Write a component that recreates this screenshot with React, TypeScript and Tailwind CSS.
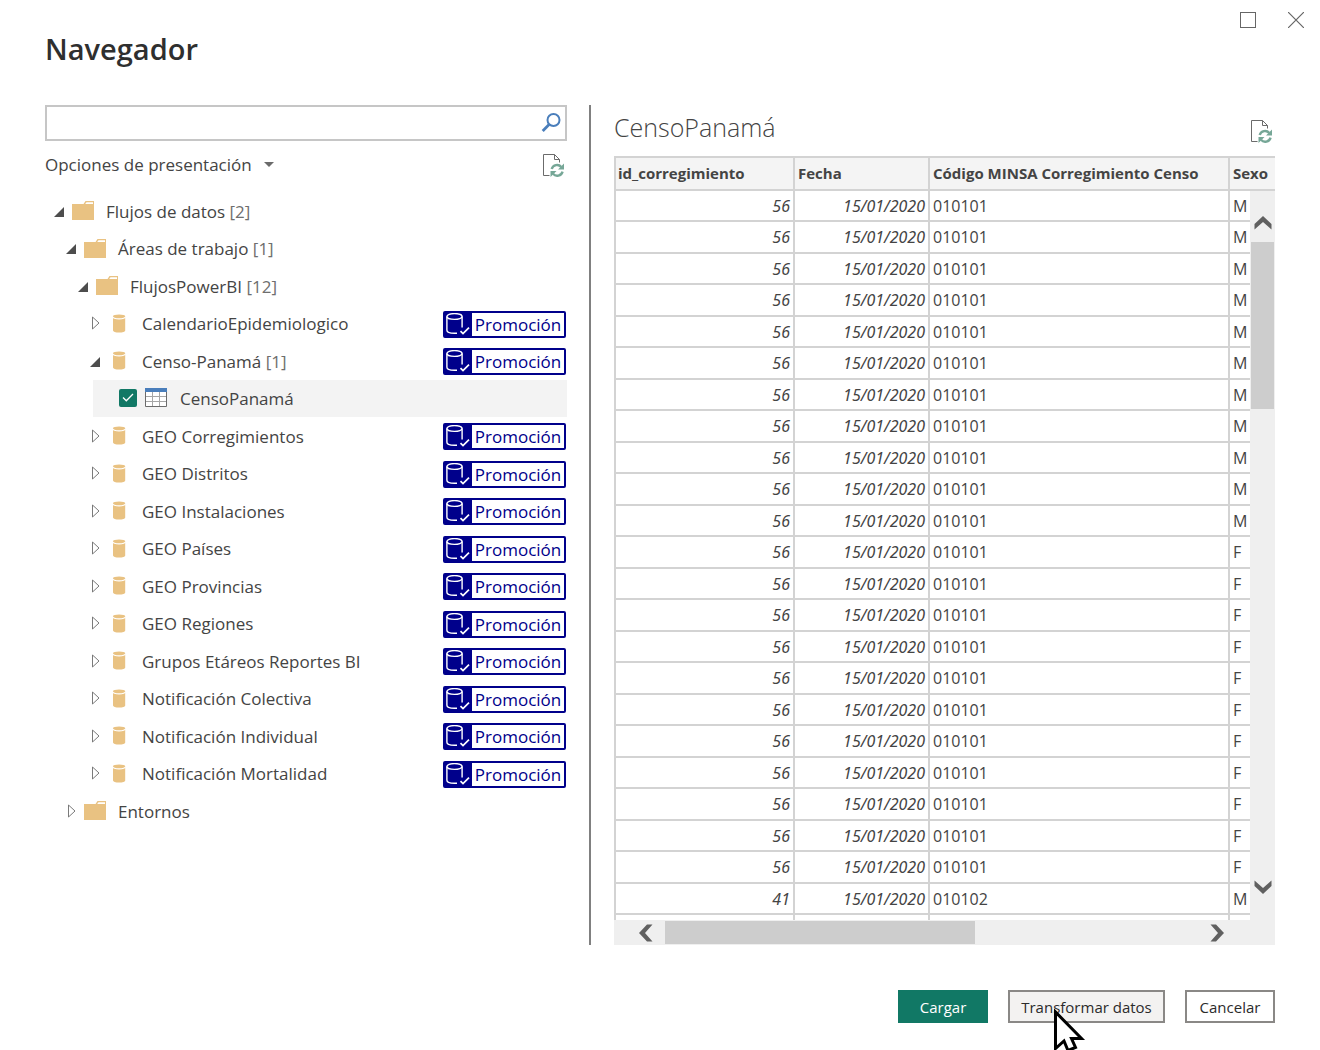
import type { ReactNode } from "react";

type Kind = "folder" | "flow" | "table";
type Node = { level: 0 | 1 | 2 | 3; kind: Kind; name: string; count?: number; open?: boolean };

const flow = (name: string): Node => ({ level: 3, kind: "flow", name });

const NODES: Node[] = [
  { level: 0, kind: "folder", name: "Flujos de datos", count: 2, open: true },
  { level: 1, kind: "folder", name: "Áreas de trabajo", count: 1, open: true },
  { level: 2, kind: "folder", name: "FlujosPowerBI", count: 12, open: true },
  flow("CalendarioEpidemiologico"),
  { level: 3, kind: "flow", name: "Censo-Panamá", count: 1, open: true },
  { level: 3, kind: "table", name: "CensoPanamá" },
  flow("GEO Corregimientos"),
  flow("GEO Distritos"),
  flow("GEO Instalaciones"),
  flow("GEO Países"),
  flow("GEO Provincias"),
  flow("GEO Regiones"),
  flow("Grupos Etáreos Reportes BI"),
  flow("Notificación Colectiva"),
  flow("Notificación Individual"),
  flow("Notificación Mortalidad"),
  { level: 1, kind: "folder", name: "Entornos" },
];

const INDENT = ["pl-[9px]", "pl-[21px]", "pl-[33px]", "pl-[45px]"];

type Row = { id: string; date: string; code: string; sex: string };
const DATE = "15/01/2020";
const ROWS: Row[] = [
  ...Array.from({ length: 22 }, (_, i) => ({ id: "56", date: DATE, code: "010101", sex: i < 11 ? "M" : "F" })),
  { id: "41", date: DATE, code: "010102", sex: "M" },
  { id: "41", date: DATE, code: "010102", sex: "M" },
];

function RefreshPage() {
  return (
    <svg width="23" height="25" viewBox="0 0 23 25" fill="none" aria-hidden="true">
      <path d="M7.5 22.5H1.5V1.5H12.5L17.5 6.5V9.5M12.5 1.5V6.5H17.5" stroke="#6b6b6b" />
      <path d="M9.7 16A5.6 5.6 0 0 1 19.3 14M20.6 18.6A5.6 5.6 0 0 1 11 20.8" stroke="#76a797" strokeWidth="2.4" />
      <path d="M22 10.5V16.5H16ZM8.5 24V18H14.5Z" fill="#76a797" />
    </svg>
  );
}

function Folder() {
  return (
    <svg width="22" height="19" viewBox="0 0 22 19" aria-hidden="true">
      <path d="M0 3H11.5L13.5 0H22V19H0Z" fill="#e9c282" />
      <path d="M13.2 3L14.5 1.2H21V3Z" fill="#fff" />
    </svg>
  );
}

function Cylinder() {
  return (
    <svg width="22" height="19" viewBox="0 0 22 19" aria-hidden="true">
      <path d="M5 3V16.4C5 17.6 7.5 18.5 11 18.5S17.2 17.6 17.2 16.4V3Z" fill="#e9c282" />
      <ellipse cx="11.1" cy="3" rx="6.8" ry="2.6" fill="#fff" />
      <ellipse cx="11.1" cy="2.3" rx="6.2" ry="1.9" fill="#e9c282" />
    </svg>
  );
}

function TableIcon() {
  return (
    <svg width="22" height="19" viewBox="0 0 22 19" fill="none" aria-hidden="true">
      <path d="M0.5 4V18.5H21.5V4" fill="#fff" stroke="#6b6b6b" />
      <path d="M1 8.5H21M1 13.5H21M7.5 4V18M14.5 4V18" stroke="#a6a6a6" />
      <path d="M0 0H22V4H0Z" fill="#4a7ebb" />
    </svg>
  );
}

function Toggle({ open, name }: { open?: boolean; name: string }) {
  return (
    <button type="button" aria-label={name} aria-expanded={!!open} className="mr-2 flex w-[10px] shrink-0 justify-end">
      {open ? (
        <svg width="10" height="10" viewBox="0 0 10 10" aria-hidden="true">
          <path d="M10 0V10H0Z" fill="#4d4d4d" />
        </svg>
      ) : (
        <svg width="8" height="16" viewBox="0 0 8 16" fill="none" aria-hidden="true">
          <path d="M0.5 1V13L7 7Z" stroke="#7a7a7a" />
        </svg>
      )}
    </button>
  );
}

function Badge() {
  return (
    <span className="mr-px ml-auto flex h-[27px] w-[123px] shrink-0 items-stretch rounded-xs border-2 border-[#00008b] bg-[#00008b]">
      <svg className="w-[27px]" viewBox="0 0 27 23" fill="none" stroke="#fff" strokeWidth="1.4" aria-hidden="true">
        <ellipse cx="9.5" cy="3.5" rx="7.6" ry="2.9" />
        <path d="M1.9 3.5V17.2C1.9 19 5 20.3 9.5 20.3H12M17.1 3.5V14.5" />
        <path d="M15.5 18.2L18 20.6L24 14.6" strokeWidth="1.7" />
      </svg>
      <span className="flex flex-1 items-center justify-center bg-white pt-px text-[17px] text-[#00008b]">Promoción</span>
    </span>
  );
}

function TreeRow({ node }: { node: Node }) {
  if (node.kind === "table") {
    return (
      <li className="flex odd:h-[37px] even:h-[38px]">
        <label className="ml-12 flex h-[37px] flex-1 items-center bg-[#f3f3f3] pl-[26px]">
          <span className="grid place-items-center pb-0.5">
            <input
              type="checkbox"
              defaultChecked
              className="col-start-1 row-start-1 size-[18px] appearance-none rounded-xs bg-[#117865]"
            />
            <svg className="col-start-1 row-start-1" width="12" height="9" viewBox="0 0 12 9" fill="none" aria-hidden="true">
              <path d="M1 4.5L4.3 7.8L11 1" stroke="#fff" strokeWidth="1.3" />
            </svg>
          </span>
          <span className="mr-[13px] ml-2 pb-0.5">
            <TableIcon />
          </span>
          {node.name}
        </label>
      </li>
    );
  }
  return (
    <li className={`flex items-center odd:h-[37px] even:h-[38px] ${INDENT[node.level]}`}>
      <Toggle open={node.open} name={node.name} />
      <span className="mr-3 pb-0.5">{node.kind === "folder" ? <Folder /> : <Cylinder />}</span>
      <span className="whitespace-nowrap">
        {node.name}
        {node.count !== undefined && <span className="text-[#6e6e6e]"> [{node.count}]</span>}
      </span>
      {node.kind === "flow" && <Badge />}
    </li>
  );
}

function Arrow({ d, label, className }: { d: string; label: string; className: string }) {
  return (
    <button type="button" aria-label={label} className={className}>
      <svg width="18" height="18" viewBox="0 0 18 18" aria-hidden="true">
        <path d={d} fill="#606060" />
      </svg>
    </button>
  );
}

function Th({ children }: { children: ReactNode }) {
  return (
    <th scope="col" className="h-[35px] border-y-2 border-r-2 border-[#d3d3d3] px-[3px] pt-0 pb-0.5 text-left font-bold first:border-l-2 first:px-[2px]">
      {children}
    </th>
  );
}

function Preview() {
  const cell = "border-r-2 border-b-2 border-[#d3d3d3] px-[3px] py-0";
  return (
    <div className="relative min-h-0 flex-1 overflow-hidden">
      <table className="w-[716px] table-fixed border-separate border-spacing-0 text-base leading-5 whitespace-nowrap">
        <colgroup>
          <col className="w-[181px]" />
          <col className="w-[135px]" />
          <col className="w-[300px]" />
          <col className="w-[100px]" />
        </colgroup>
        <thead className="bg-[#f4f4f4] text-[15px]">
          <tr>
            <Th>id_corregimiento</Th>
            <Th>Fecha</Th>
            <Th>Código MINSA Corregimiento Censo</Th>
            <Th>Sexo</Th>
          </tr>
        </thead>
        <tbody>
          {ROWS.map((r, i) => (
            <tr key={i} className="odd:h-[31px] even:h-[32px]">
              <td className={`${cell} border-l-2 text-right font-['Noto_Sans',sans-serif] italic`}>{r.id}</td>
              <td className={`${cell} text-right font-['Noto_Sans',sans-serif] italic`}>{r.date}</td>
              <td className={cell}>{r.code}</td>
              <td className={cell}>{r.sex}</td>
            </tr>
          ))}
        </tbody>
      </table>
      <div className="absolute top-[35px] right-0 bottom-[25px] flex w-[25px] flex-col items-center bg-[#efefef]">
        <Arrow label="Subir" d="M0.5 10L9 2L17.5 10V15.5L9 8L0.5 15.5Z" className="flex h-[51px] items-center pt-3" />
        <div className="h-[167px] w-[23px] bg-[#cdcdcd]" />
        <Arrow label="Bajar" d="M0.5 8L9 16L17.5 8V2.5L9 10L0.5 2.5Z" className="mt-auto flex h-[51px] items-center pb-4" />
      </div>
      <div className="absolute right-0 bottom-0 left-0 flex h-[25px] items-center bg-[#efefef] pr-[25px]">
        <Arrow label="Izquierda" d="M10 0.5L2 9L10 17.5H15.5L8 9L15.5 0.5Z" className="flex w-[51px] justify-center pl-3" />
        <div className="h-[23px] w-[310px] bg-[#cdcdcd]" />
        <Arrow label="Derecha" d="M8 0.5L16 9L8 17.5H2.5L10 9L2.5 0.5Z" className="ml-auto flex w-[51px] justify-center pr-4" />
      </div>
    </div>
  );
}

export default function App() {
  return (
    <div className="flex h-screen flex-col overflow-hidden bg-white font-['Open_Sans','Noto_Sans',sans-serif] text-[17px] text-[#444]">
      <header>
        <div className="flex justify-end gap-8 pt-3 pr-4">
          <button type="button" aria-label="Maximizar" className="size-4 border border-[#666]" />
          <button type="button" aria-label="Cerrar">
            <svg width="16" height="16" viewBox="0 0 16 16" aria-hidden="true">
              <path d="M0 0L16 16M16 0L0 16" stroke="#666" strokeWidth="1.2" />
            </svg>
          </button>
        </div>
        <h1 className="ml-[45px] text-[29px] leading-[42px] font-semibold text-[#2f2f2f]">Navegador</h1>
      </header>

      <main className="mx-[45px] mt-[35px] grid min-h-0 flex-1 grid-cols-[544fr_2px_684fr]">
        <section className="mr-[22px] min-w-0">
          <div className="flex h-9 items-center border-2 border-[#c6c6c6] pr-1">
            <input type="search" aria-label="Buscar" className="h-full min-w-0 flex-1 px-2 outline-none" />
            <button type="button" aria-label="Buscar ahora">
              <svg width="20" height="20" viewBox="0 0 20 20" fill="none" stroke="#4a7ebb" aria-hidden="true">
                <circle cx="12.5" cy="7" r="6" strokeWidth="2" />
                <path d="M8.3 11.3L1.7 17.9" strokeWidth="2.8" />
              </svg>
            </button>
          </div>
          <div className="mt-2 mb-3 flex h-8 items-center justify-between">
            <button type="button" className="flex items-center gap-3">
              Opciones de presentación
              <svg width="10" height="7" viewBox="0 0 10 7" aria-hidden="true">
                <path d="M0 0H10L5 5Z" fill="#6b6b6b" />
              </svg>
            </button>
            <button type="button" aria-label="Actualizar" className="mr-[2px]">
              <RefreshPage />
            </button>
          </div>
          <ul>
            {NODES.map((n) => (
              <TreeRow key={n.name} node={n} />
            ))}
          </ul>
        </section>

        <div className="bg-[#808080]" />

        <section className="ml-[23px] flex min-h-0 min-w-0 flex-col">
          <div className="flex h-[51px] items-center justify-between">
            <h2 className="pb-2 text-[25px] leading-9 font-light">CensoPanamá</h2>
            <button type="button" aria-label="Actualizar vista previa" className="mr-[2px] pt-0.5">
              <RefreshPage />
            </button>
          </div>
          <Preview />
        </section>
      </main>

      <footer className="mx-[45px] mt-[45px] mb-[27px] flex justify-end gap-5 text-[15px]">
        <button type="button" className="h-[33px] w-[90px] bg-[#117865] pt-0.5 text-white">
          Cargar
        </button>
        <div className="relative">
          <button type="button" className="h-[33px] w-[157px] border-2 border-[#8a8886] bg-[#f3f2f1] pt-0.5 text-[#2b2b2b]">
            Transformar datos
          </button>
          <svg className="pointer-events-none absolute top-[17px] left-[45px]" width="34" height="50" viewBox="0 0 34 50" aria-hidden="true">
            <path
              d="M2.5 5V41.5L11 34L15 43.5L22.5 40.5L18.5 31.5H28.5Z"
              fill="#fff"
              stroke="#000"
              strokeWidth="3"
            />
          </svg>
        </div>
        <button type="button" className="h-[33px] w-[90px] border-2 border-[#8a8886] bg-white pt-0.5 text-[#2b2b2b]">
          Cancelar
        </button>
      </footer>
    </div>
  );
}
